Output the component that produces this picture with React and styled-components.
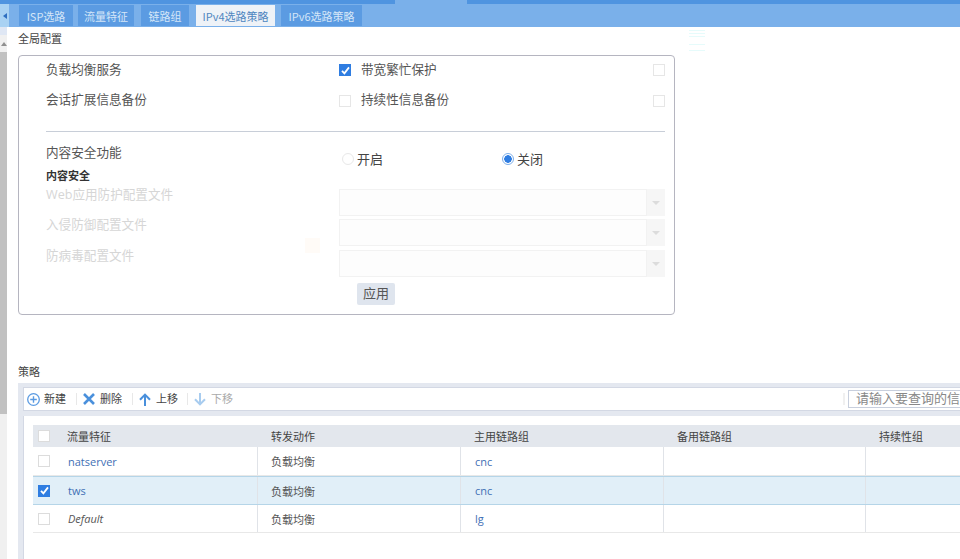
import React from "react";
import styled, { createGlobalStyle } from "styled-components";

const GlobalStyle = createGlobalStyle`
  html, body { margin: 0; padding: 0; height: 100%; overflow: hidden; background: #fff; }
  body { font-family: "Noto Sans CJK SC", "Noto Sans", sans-serif; font-size: 13px; color: #444; }
  #root { height: 100%; }
`;

const Page = styled.div`
  position: relative;
  width: 960px;
  height: 559px;
  overflow: hidden;
`;

const TopStrip = styled.div`
  display: flex;
  height: 4px;
  background: #4f94e0;
`;

const TopStripGap = styled.div`
  width: 72px;
  margin-left: 395px;
  background: #7ab0ea;
`;

const TabBar = styled.div`
  display: flex;
  height: 23px;
  background: #7ab0ea;
`;

const TabToggle = styled.div`
  display: flex;
  align-items: center;
  justify-content: center;
  width: 9px;
  margin-right: 10px;
  background: #a9d2f3;
  &::before {
    content: "";
    border: 3px solid transparent;
    border-right: 4px solid #2f6fc0;
    border-left: 0;
  }
`;

const Tab = styled.div`
  display: flex;
  align-items: center;
  justify-content: center;
  width: ${(p) => p.$w}px;
  margin: 1px ${(p) => p.$gap}px 1px 0;
  font-size: 11px;
  color: ${(p) => (p.$active ? "#4f86c0" : "#d5e6f8")};
  background: ${(p) => (p.$active ? "#eef2f7" : "#5b9be2")};
`;

const Body = styled.div`
  display: flex;
  height: 532px;
`;

const ScrollTrack = styled.div`
  display: flex;
  flex-direction: column;
  width: 7px;
  margin-right: 11px;
  background: #f0f0f0;
`;

const ScrollTop = styled.div`
  height: 8px;
  background: #dfe7f4;
`;

const ScrollButton = styled.div`
  display: flex;
  align-items: center;
  justify-content: center;
  height: 17px;
  &::before {
    content: "";
    border: 3px solid transparent;
    border-bottom: 4px solid #8f8f8f;
    border-top: 0;
  }
`;

const ScrollThumb = styled.div`
  height: 362px;
  background: #c1c1c1;
`;

const Main = styled.div`
  flex: 1;
  min-width: 0;
`;

const SectionTitle = styled.div`
  height: ${(p) => p.$h}px;
  padding-top: ${(p) => p.$top}px;
  box-sizing: border-box;
  font-size: 11px;
  line-height: 18px;
  color: #444;
`;

const ConfigBox = styled.div`
  box-sizing: border-box;
  width: 657px;
  height: 260px;
  padding: 0 9px 0 27px;
  border: 1px solid #b5b5c0;
  border-radius: 4px;
`;

const OptionRow = styled.div`
  display: grid;
  grid-template-columns: 293px 22px 1fr 12px;
  align-items: center;
  height: ${(p) => p.$h}px;
  line-height: 18px;
`;

const Label = styled.span`
  font-family: "Open Sans", "Noto Sans CJK SC", sans-serif;
  font-size: 12.6px;
  color: ${(p) => (p.$disabled ? "#d6d6d6" : "#555")};
`;

const OptionLabel = styled(Label)`
  margin-top: ${(p) => p.$lift}px;
`;

const Check = styled.span`
  display: flex;
  align-items: center;
  justify-content: center;
  box-sizing: border-box;
  width: 12px;
  height: 12px;
  background: ${(p) => (p.$on ? "#2f7de1" : "#fff")};
  border: ${(p) => (p.$on ? "0" : `1px solid ${p.$strong ? "#dcdcdc" : "#e6e6e6"}`)};
  svg { display: block; }
`;

const Divider = styled.div`
  height: 1px;
  margin-top: 13px;
  background: #c8ced8;
`;

const RadioRow = styled.div`
  display: grid;
  grid-template-columns: 293px 160px 1fr;
  height: 37px;
  padding-top: 12px;
  box-sizing: border-box;
  line-height: 18px;
`;

const RadioItem = styled.span`
  display: flex;
  align-items: center;
  gap: 3px;
  height: 18px;
  margin-top: 6px;
  padding-left: 3px;
`;

const RadioDot = styled.span`
  box-sizing: border-box;
  width: 12px;
  height: 12px;
  border-radius: 50%;
  border: 1px solid ${(p) => (p.$on ? "#7fb0ea" : "#e8e8e8")};
  background: ${(p) => (p.$on ? "radial-gradient(circle, #2f7de1 0 3.5px, #fff 4px)" : "#fff")};
`;

const SubHeading = styled.div`
  height: 21px;
  margin-top: -1px;
  font-size: 11px;
  font-weight: 700;
  line-height: 15px;
  color: #333;
`;

const SelectRow = styled.div`
  display: grid;
  grid-template-columns: 293px 1fr;
  align-items: start;
  height: ${(p) => p.$h}px;
  line-height: 18px;
  & > span { margin-top: -3px; }
`;

const Select = styled.div`
  display: flex;
  height: 27px;
  box-sizing: border-box;
  background: #fdfdfd;
`;

const SelectValue = styled.div`
  flex: 1;
  border: 1px solid #f2f2f2;
`;

const SelectArrow = styled.div`
  display: flex;
  align-items: center;
  justify-content: center;
  width: 18px;
  background: #f6f6f6;
  &::before {
    content: "";
    border: 4px solid transparent;
    border-top: 4px solid #dcdcdc;
    border-bottom: 0;
  }
`;

const ApplyButton = styled.button`
  display: block;
  width: 38px;
  height: 22px;
  margin: 6px 0 0 311px;
  padding: 0 0 3px;
  border: 0;
  border-radius: 2px;
  font: inherit;
  line-height: 18px;
  color: #555;
  background: #dfe5ee;
`;

const Panel = styled.div`
  padding: 4px 0 0 5px;
  height: 176px;
  background: #e4e8f0;
`;

const Toolbar = styled.div`
  display: flex;
  align-items: center;
  box-sizing: border-box;
  height: 24px;
  padding-left: 3px;
  font-size: 11px;
  line-height: 18px;
  background: #fff;
  border: 1px solid #d3d8e4;
  border-right: 0;
`;

const ToolButton = styled.span`
  display: flex;
  align-items: center;
  gap: ${(p) => p.$gap}px;
  margin-right: ${(p) => p.$after}px;
  padding-bottom: 2px;
  color: ${(p) => (p.$disabled ? "#aaa" : "#444")};
  svg { flex: none; margin-top: 2px; }
`;

const ToolSeparator = styled.span`
  width: 1px;
  height: 12px;
  margin-right: 6px;
  background: #e8e8e8;
`;

const SearchSeparator = styled.span`
  width: 2px;
  height: 12px;
  margin-left: auto;
  margin-right: 3px;
  background: #f0f0f0;
`;

const SearchBox = styled.div`
  flex: none;
  box-sizing: border-box;
  width: 140px;
  height: 18px;
  margin-right: -28px;
  padding-left: 7px;
  border: 1px solid #c8cfdd;
  font-size: 13px;
  line-height: 13px;
  white-space: nowrap;
  overflow: hidden;
  color: #888;
`;

const TableArea = styled.div`
  height: 143px;
  margin-top: 5px;
  padding: 9px 0 0 9px;
  background: #fff;
  border-left: 1px solid #d3d8e4;
  box-sizing: border-box;
`;

const Row = styled.div`
  display: grid;
  grid-template-columns: 34px 190px 203px 203px 202px 200px;
  align-items: center;
  box-sizing: border-box;
  width: 1032px;
  height: 29px;
  background: ${(p) => (p.$selected ? "#e1eff8" : "#fff")};
  border-top: ${(p) => (p.$selected ? "1px solid #b5d5e8" : "0")};
  border-bottom: 1px solid ${(p) => (p.$selected ? "#b5d5e8" : "#e8e8e8")};
  font-size: 11px;
  &:last-child { height: 28px; }
`;

const HeadRow = styled(Row)`
  height: 22px;
  background: #e3e7ed;
  border: 0;
`;

const CheckCell = styled.div`
  padding-left: 5px;
`;

const Cell = styled.div`
  display: flex;
  align-items: center;
  align-self: stretch;
  padding-left: ${(p) => (p.$first ? (p.$latin ? 1 : 0) : p.$head || p.$latin ? 14 : 13)}px;
  border-left: ${(p) => (p.$first || p.$head ? "0" : "1px solid #e0e3e8")};
  color: ${(p) => (p.$head ? "#444" : p.$link ? "#3f6fb5" : "#555")};
  font-family: ${(p) => (p.$latin ? '"Open Sans", sans-serif' : "inherit")};
  font-style: ${(p) => (p.$italic ? "italic" : "normal")};
`;

const Ghost = styled.div`
  position: absolute;
  left: ${(p) => p.$x}px;
  top: ${(p) => p.$y}px;
  width: ${(p) => p.$w}px;
  height: ${(p) => p.$h}px;
  background: ${(p) => p.$bg};
`;

const Tick = () => (
  <svg width="9" height="9" viewBox="0 0 9 9" fill="none">
    <path d="M1 4.8 L3.4 7.4 L8 1.4" stroke="#fff" strokeWidth="1.8" />
  </svg>
);

const PlusIcon = () => (
  <svg width="13" height="13" viewBox="0 0 13 13" fill="none" stroke="#5b9be2">
    <circle cx="6.5" cy="6.5" r="5.8" strokeWidth="1.3" />
    <path d="M6.5 3.2V9.8M3.2 6.5H9.8" strokeWidth="1.4" />
  </svg>
);

const CrossIcon = () => (
  <svg width="12" height="12" viewBox="0 0 12 12" fill="none" stroke="#4a90dc">
    <path d="M1 1L11 11M11 1L1 11" strokeWidth="2.6" />
  </svg>
);

const UpIcon = () => (
  <svg width="12" height="13" viewBox="0 0 12 13" fill="none" stroke="#4a90dc">
    <path d="M6 13V2M1 6.8L6 1.6L11 6.8" strokeWidth="2" />
  </svg>
);

const DownIcon = () => (
  <svg width="12" height="13" viewBox="0 0 12 13" fill="none" stroke="#a8ccef">
    <path d="M6 0V11M1 6.2L6 11.4L11 6.2" strokeWidth="2" />
  </svg>
);

const tabs = [
  { name: "ISP选路", w: 54, gap: 5 },
  { name: "流量特征", w: 56, gap: 7 },
  { name: "链路组", w: 48, gap: 7 },
  { name: "IPv4选路策略", w: 79, gap: 6, active: true },
  { name: "IPv6选路策略", w: 81, gap: 0 },
];

const rows = [
  { name: "natserver", group: "cnc", isLink: true },
  { name: "tws", group: "cnc", isLink: true, selected: true },
  { name: "Default", group: "lg", italic: true },
];

function App() {
  return (
    <Page>
      <GlobalStyle />
      <TopStrip>
        <TopStripGap />
      </TopStrip>
      <TabBar>
        <TabToggle />
        {tabs.map((t) => (
          <Tab key={t.name} $w={t.w} $gap={t.gap} $active={t.active}>
            {t.name}
          </Tab>
        ))}
      </TabBar>
      <Body>
        <ScrollTrack>
          <ScrollTop />
          <ScrollButton />
          <ScrollThumb />
        </ScrollTrack>
        <Main>
          <SectionTitle $h={28} $top={2}>全局配置</SectionTitle>
          <ConfigBox>
            <OptionRow $h={28}>
              <OptionLabel $lift={0}>负载均衡服务</OptionLabel>
              <Check $on><Tick /></Check>
              <OptionLabel $lift={0}>带宽繁忙保护</OptionLabel>
              <Check />
            </OptionRow>
            <OptionRow $h={34}>
              <OptionLabel $lift={-2}>会话扩展信息备份</OptionLabel>
              <Check />
              <OptionLabel $lift={-2}>持续性信息备份</OptionLabel>
              <Check />
            </OptionRow>
            <Divider />
            <RadioRow>
              <Label>内容安全功能</Label>
              <RadioItem><RadioDot />开启</RadioItem>
              <RadioItem><RadioDot $on />关闭</RadioItem>
            </RadioRow>
            <SubHeading>内容安全</SubHeading>
            <SelectRow $h={30}>
              <Label $disabled>Web应用防护配置文件</Label>
              <Select><SelectValue /><SelectArrow /></Select>
            </SelectRow>
            <SelectRow $h={31}>
              <Label $disabled>入侵防御配置文件</Label>
              <Select><SelectValue /><SelectArrow /></Select>
            </SelectRow>
            <SelectRow $h={27}>
              <Label $disabled>防病毒配置文件</Label>
              <Select><SelectValue /><SelectArrow /></Select>
            </SelectRow>
            <ApplyButton>应用</ApplyButton>
          </ConfigBox>
          <SectionTitle $h={68} $top={47}>策略</SectionTitle>
          <Panel>
            <Toolbar>
              <ToolButton $gap={4} $after={10}><PlusIcon />新建</ToolButton>
              <ToolSeparator />
              <ToolButton $gap={5} $after={10}><CrossIcon />删除</ToolButton>
              <ToolSeparator />
              <ToolButton $gap={5} $after={9}><UpIcon />上移</ToolButton>
              <ToolSeparator />
              <ToolButton $gap={5} $after={0} $disabled><DownIcon />下移</ToolButton>
              <SearchSeparator />
              <SearchBox>请输入要查询的信息</SearchBox>
            </Toolbar>
            <TableArea>
              <HeadRow>
                <CheckCell><Check $strong /></CheckCell>
                <Cell $first $head>流量特征</Cell>
                <Cell $head>转发动作</Cell>
                <Cell $head>主用链路组</Cell>
                <Cell $head>备用链路组</Cell>
                <Cell $head>持续性组</Cell>
              </HeadRow>
              {rows.map((r) => (
                <Row key={r.name} $selected={r.selected}>
                  <CheckCell>
                    {r.selected ? <Check $on><Tick /></Check> : <Check $strong />}
                  </CheckCell>
                  <Cell $first $latin $link={r.isLink} $italic={r.italic}>{r.name}</Cell>
                  <Cell>负载均衡</Cell>
                  <Cell $latin $link>{r.group}</Cell>
                  <Cell />
                  <Cell />
                </Row>
              ))}
            </TableArea>
          </Panel>
        </Main>
      </Body>
      <Ghost $x={689} $y={30} $w={16} $h={1} $bg="#e6fbfb" />
      <Ghost $x={689} $y={33} $w={16} $h={1} $bg="#e6fbfb" />
      <Ghost $x={689} $y={36} $w={16} $h={1} $bg="#e6fbfb" />
      <Ghost $x={689} $y={44} $w={16} $h={1} $bg="#e6fbfb" />
      <Ghost $x={689} $y={50} $w={16} $h={1} $bg="#e6fbfb" />
      <Ghost $x={305} $y={238} $w={15} $h={15} $bg="#fffbf7" />
    </Page>
  );
}

export default App;
